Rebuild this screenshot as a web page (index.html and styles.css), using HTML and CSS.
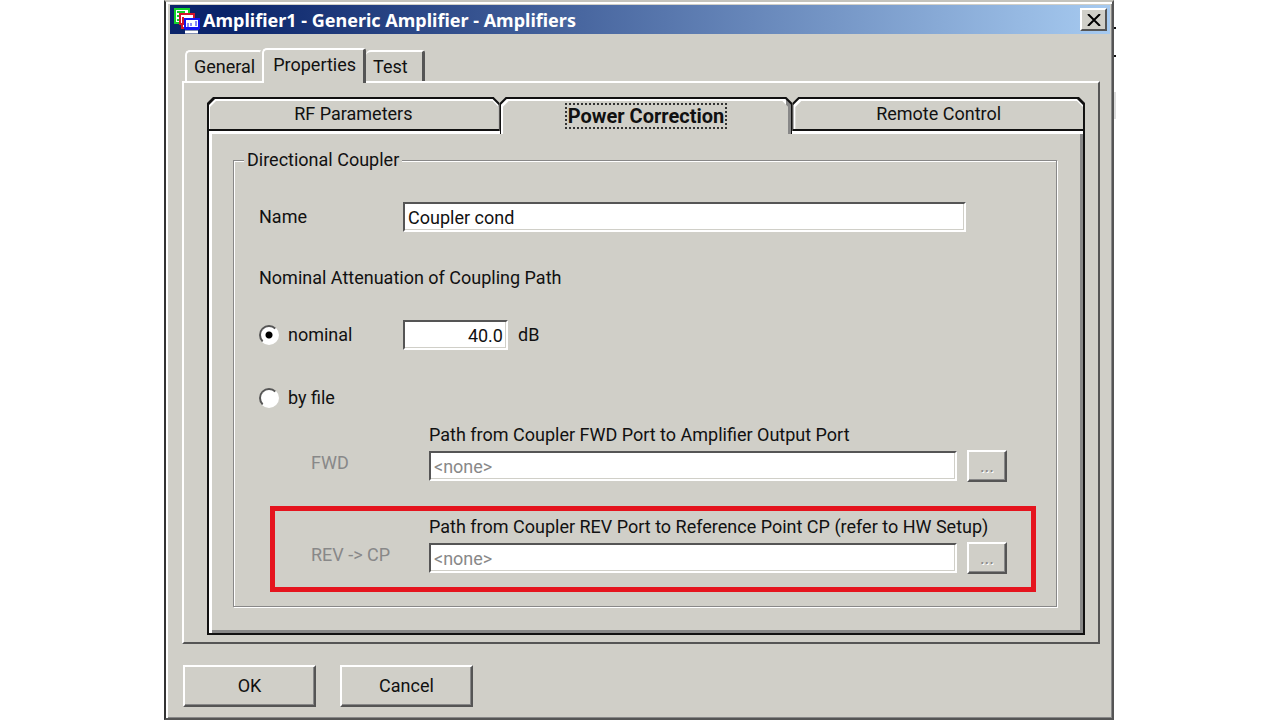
FILE: index.html
```html
<!DOCTYPE html>
<html lang="en">
<head>
    <meta charset="UTF-8">
    <meta name="viewport" content="width=device-width, initial-scale=1.0">
    <title>Amplifier1 - Generic Amplifier - Amplifiers</title>
    <link rel="stylesheet" href="styles.css">
</head>
<body>
    <form class="dialog">
        <svg class="edge-marks" width="4" height="120" aria-hidden="true">
            <path d="M0 28h2M0 56h2" stroke="#111" stroke-width="2"/>
            <path d="M1 92v27" stroke="#ddd" stroke-width="2"/>
        </svg>

        <header class="title-bar">
            <svg class="title-icon" width="28" height="28" viewBox="0 0 28 28" aria-hidden="true">
                <path d="M2 3h14v5H8v9H2z" fill="#fff" stroke="#14d228" stroke-width="2"/>
                <path d="M4 6h8M4 10h3M4 14h3" stroke="#14d228" stroke-width="2"/>
                <path d="M7 8h14v5h-8v9H9v-4H7z" fill="#fff" stroke="#d4142a" stroke-width="2"/>
                <path d="M10 11v8" stroke="#d4142a" stroke-width="2"/>
                <path d="M12 13h14v9H12z" fill="#fff" stroke="#1414f0" stroke-width="2"/>
                <path d="M15 17v4M18 17v3M23 15v5" stroke="#1414f0" stroke-width="1"/>
                <path d="M12 23h14" stroke="#1414f0" stroke-width="2"/>
                <path d="M12 26h13" stroke="#fff" stroke-width="3"/>
            </svg>
            <h1>Amplifier1 - Generic Amplifier - Amplifiers</h1>
            <button type="button" class="close-button" aria-label="Close">
                <svg width="14" height="12" viewBox="0 0 14 12" aria-hidden="true">
                    <path d="M1 0l12 12M13 0L1 12" stroke="#000" stroke-width="2"/>
                </svg>
            </button>
        </header>

        <nav class="tabs">
            <button type="button" class="tab">General</button>
            <button type="button" class="tab active">Properties</button>
            <button type="button" class="tab">Test</button>
        </nav>

        <main class="tab-panel">
            <nav class="sub-tabs">
                <button type="button" class="sub-tab">RF Parameters</button>
                <button type="button" class="sub-tab active"><span>Power Correction</span></button>
                <button type="button" class="sub-tab">Remote Control</button>
            </nav>

            <div class="sub-panel">
                <fieldset class="coupler">
                    <legend>Directional Coupler</legend>

                    <div class="row">
                        <label for="couplerName">Name</label>
                        <input id="couplerName" class="field" type="text" value="Coupler cond">
                    </div>

                    <p class="caption">Nominal Attenuation of Coupling Path</p>

                    <div class="row">
                        <label class="radio"><input type="radio" name="source" checked>nominal</label>
                        <div class="value">
                            <input id="attenuation" class="field number" type="text" value="40.0">
                            <label for="attenuation">dB</label>
                        </div>
                    </div>

                    <div class="row by-file">
                        <label class="radio"><input type="radio" name="source">by file</label>
                    </div>

                    <div class="path">
                        <div class="path-title">Path from Coupler FWD Port to Amplifier Output Port</div>
                        <label class="path-label" for="fwdPath">FWD</label>
                        <input id="fwdPath" class="field" type="text" value="&lt;none&gt;" disabled>
                        <button type="button" class="button browse" disabled>...</button>
                    </div>

                    <div class="path highlight">
                        <div class="path-title">Path from Coupler REV Port to Reference Point CP (refer to HW Setup)</div>
                        <label class="path-label" for="revPath">REV -&gt; CP</label>
                        <input id="revPath" class="field" type="text" value="&lt;none&gt;" disabled>
                        <button type="button" class="button browse" disabled>...</button>
                    </div>
                </fieldset>
            </div>
        </main>

        <footer class="actions">
            <button type="submit" class="button">OK</button>
            <button type="button" class="button">Cancel</button>
        </footer>
    </form>
</body>
</html>
```
FILE: styles.css
```css
* {
    margin: 0;
    padding: 0;
    box-sizing: border-box;
}

body {
    background: #fff;
    color: #111;
    font-family: Roboto, "Liberation Sans", sans-serif;
    font-size: 18px;
    line-height: 22px;
}

button,
input {
    font: inherit;
    color: inherit;
}

.dialog {
    position: relative;
    min-height: 100vh;
    margin: 0 166px 0 164px;
    padding: 3px 2px 8px 4px;
    background: #d0cfc8;
    border: 2px solid #555;
    border-top-color: #c4c3bc;
    border-left-color: #333;
    box-shadow: inset 2px 2px 0 #fff, inset -1px -1px 0 #888;
}

.edge-marks {
    position: absolute;
    top: -2px;
    left: 100%;
    margin-left: 2px;
}

/* Title bar */
.title-bar {
    display: flex;
    align-items: center;
    height: 29px;
    padding: 0 3px;
    background: linear-gradient(to right, #0a246a 6%, #a6caf0);
    color: #fff;
}

.title-icon {
    flex: none;
    margin-right: 2px;
}

h1 {
    flex: 1;
    font-family: "Noto Sans", "DejaVu Sans", sans-serif;
    font-size: 18px;
    line-height: 24px;
    font-weight: bold;
}

.close-button {
    display: flex;
    align-items: center;
    justify-content: center;
    width: 27px;
    height: 23px;
    background: #d0cfc8;
    border: 2px solid;
    border-color: #fff #555 #555 #fff;
}

/* Outer tabs */
.tabs {
    display: flex;
    align-items: flex-end;
    padding: 14px 12px 0 15px;
}

.tab {
    height: 31px;
    padding: 0 5px 0 7px;
    background: #d0cfc8;
    border: 2px solid #fff;
    border-right-color: #d0cfc8;
    border-bottom: none;
    border-radius: 5px 3px 0 0;
}

.tab.active {
    z-index: 1;
    height: 35px;
    margin-bottom: -2px;
    padding: 0 7px 4px 9px;
    border-right: 3px solid #555;
}

.tab:last-child {
    padding-right: 14px;
    border-left: none;
    border-right: 3px solid #555;
}

.tab-panel {
    margin: 0 10px 0 12px;
    padding: 14px 13px 7px 23px;
    border: 2px solid;
    border-color: #fff #555 #555 #fff;
}

/* Inner tabs, drawn as three stacked bevelled shapes */
.sub-tabs {
    display: grid;
    grid-template-columns: repeat(3, 1fr);
}

.sub-tab {
    position: relative;
    isolation: isolate;
    height: 34px;
    background: #111;
    border: none;
}

.sub-tab,
.sub-tab::before,
.sub-tab::after {
    clip-path: polygon(6px 0, calc(100% - 6px) 0, 100% 6px, 100% 100%, 0 100%, 0 6px);
}

.sub-tab::before,
.sub-tab::after {
    content: "";
    position: absolute;
    z-index: -1;
    inset: 2px 1px 2px 1px;
    background: #fff;
}

.sub-tab::after {
    inset: 4px 1px 2px 3px;
    background: #d0cfc8;
}

.sub-tab:first-child::before {
    left: 2px;
}

.sub-tab:last-child::before,
.sub-tab:last-child::after {
    right: 2px;
}

.sub-tab.active {
    z-index: 1;
    height: 37px;
    margin-bottom: -3px;
    font-size: 20px;
    font-weight: bold;
}

.sub-tab.active::before {
    bottom: 0;
    background: linear-gradient(to left, #888 5px, #fff 5px);
}

.sub-tab.active::after {
    right: 4px;
    bottom: 0;
}

.sub-tab span {
    display: inline-block;
    padding: 0 1px;
    border: 2px dotted #333;
}

.sub-panel {
    padding: 18px 26px 26px 24px;
    border: 2px solid #111;
    border-top: none;
    box-shadow: inset 3px 3px 0 #fff, inset -3px -3px 0 #888;
}

/* Directional coupler group */
.coupler {
    padding: 31px 20px 14px 25px;
    border: 1px solid #888;
    box-shadow: 1px 1px 0 #fff, inset 1px 1px 0 #fff;
}

.coupler legend {
    margin-left: -15px;
    padding: 0 3px;
    background: #d0cfc8;
}

.row {
    display: grid;
    grid-template-columns: 144px 1fr;
    align-items: center;
    min-height: 30px;
    margin-right: 70px;
}

.caption {
    margin: 35px 0 31px;
}

.by-file {
    margin-top: 33px;
}

.field {
    width: 100%;
    height: 30px;
    padding: 0 3px;
    background: #fff;
    border: 2px solid;
    border-color: #555 #fff #fff #555;
    border-radius: 0;
    box-shadow: inset -1px -1px 0 #d0cfc8;
}

.field.number {
    width: 105px;
    text-align: right;
}

.field:disabled {
    color: #888;
}

.value {
    display: flex;
    align-items: center;
    gap: 10px;
}

.radio {
    display: flex;
    align-items: center;
    gap: 9px;
}

.radio input {
    appearance: none;
    width: 20px;
    height: 20px;
    background: #fff;
    border: 2px solid;
    border-color: #555 #fff #fff #555;
    border-radius: 50%;
}

.radio input:checked {
    background: radial-gradient(circle, #000 3px, #fff 4px);
}

/* File paths */
.path {
    display: grid;
    grid-template-columns: 108px 1fr 40px;
    gap: 5px 10px;
    align-items: center;
    margin-top: 1px;
    margin-left: 11px;
    padding: 5px 24px 14px 36px;
    border: 5px solid transparent;
}

.path-title {
    grid-column: 2 / -1;
}

.path-label {
    color: #888;
    padding-bottom: 6px;
}

.path.highlight {
    margin-top: 6px;
    border-color: #e5141e;
}

/* Buttons */
.button {
    background: #d0cfc8;
    border: 2px solid;
    border-color: #fff #555 #555 #fff;
    box-shadow: inset -1px -1px 0 #888;
}

.browse {
    height: 32px;
    margin: -1px 0;
}

.browse:disabled {
    color: #888;
    text-shadow: 1px 1px 0 #fff;
}

.actions {
    display: flex;
    gap: 24px;
    padding: 21px 13px 0;
}

.actions .button {
    width: 133px;
    height: 42px;
}
```
